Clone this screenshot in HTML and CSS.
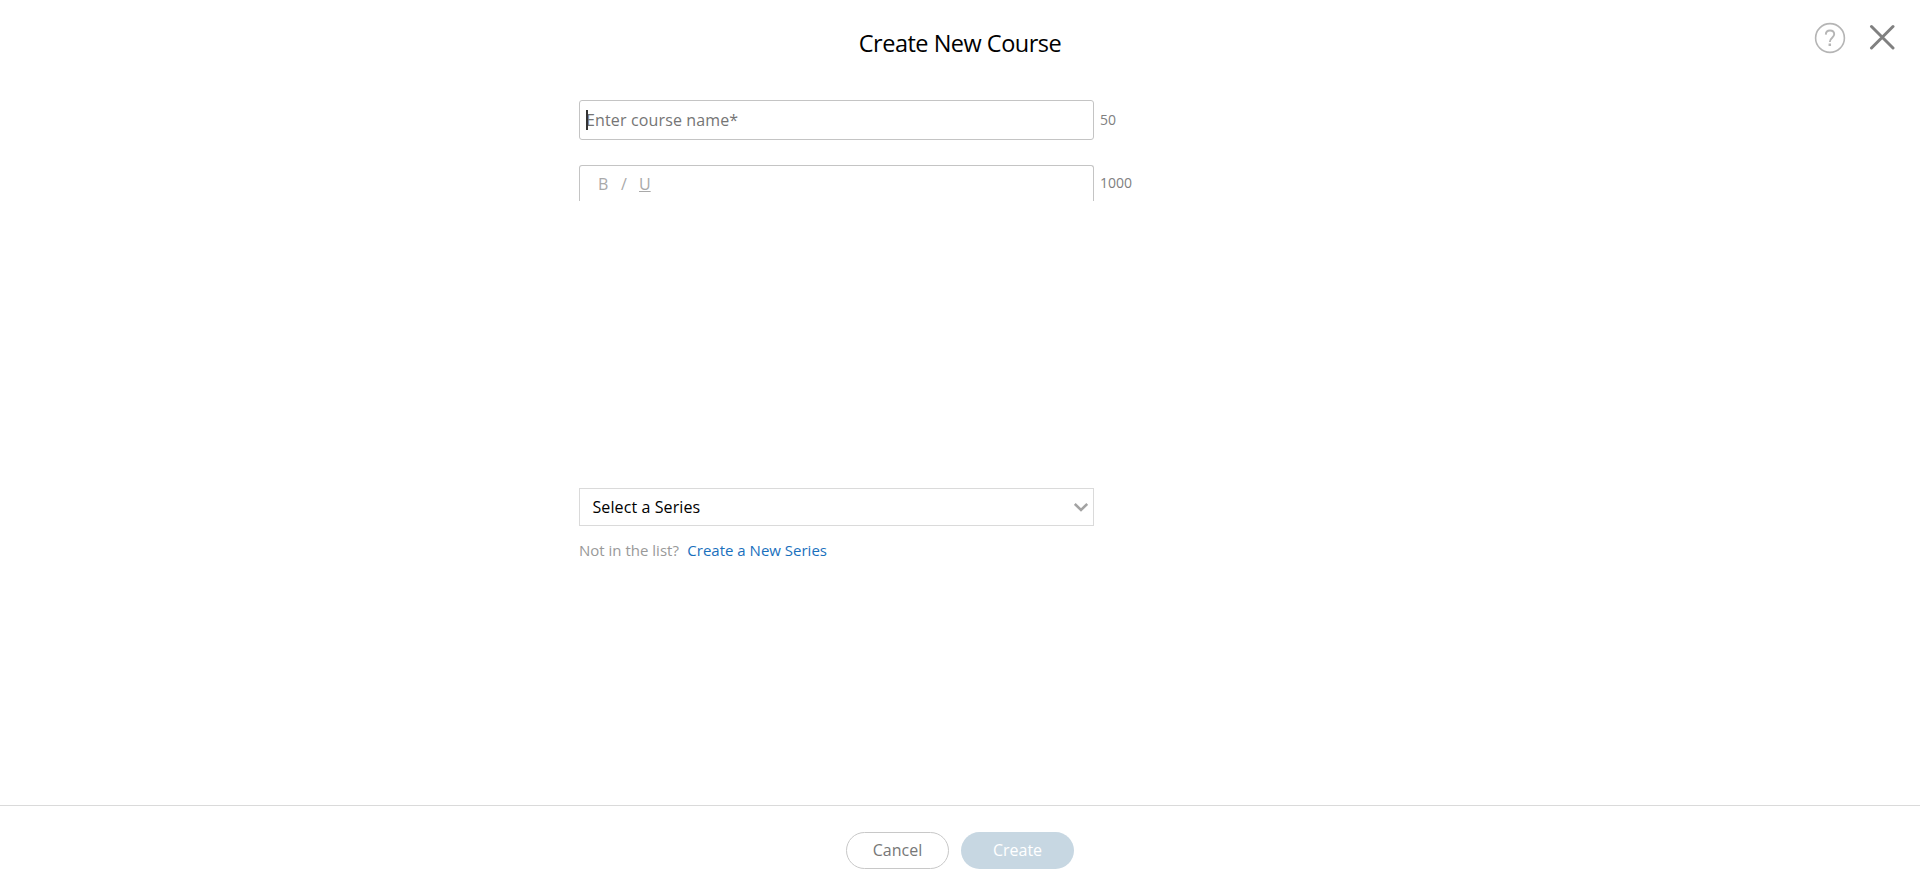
FILE: index.html
```html
<!DOCTYPE html>
<html lang="en">
<head>
<meta charset="utf-8">
<title>Create New Course</title>
<link rel="stylesheet" href="styles.css">
</head>
<body>
<div class="dialog">
  <header class="header">
    <span></span>
    <h1 class="title">Create New Course</h1>
    <div class="actions">
      <svg class="help" width="32" height="32" viewBox="0 0 32 32" fill="none" stroke="#b5b5b5"><circle cx="16" cy="16" r="14.4" stroke-width="1.6"/><path d="M11.8 12.6c.1-2.5 1.8-4.1 4.2-4.1s4.2 1.5 4.2 3.8c0 3.4-4.4 3.5-4.4 7.7" stroke-width="1.9"/><path d="M15.8 21.5v2.5" stroke-width="2.5"/></svg>
      <svg class="close" width="26" height="26" viewBox="0 0 26 26" stroke="#808080" stroke-width="3" stroke-linecap="round"><path d="M2.5 2.5l21.5 21.5M24 2.5L2.5 24"/></svg>
    </div>
  </header>
  <main class="form">
    <div class="row">
      <div class="field name"><span class="caret"></span>Enter course name*</div>
      <span class="count">50</span>
    </div>
    <div class="row editor-row">
      <div class="field toolbar"><span class="bold">B</span><span class="italic">/</span><span class="underline">U</span></div>
      <span class="count">1000</span>
    </div>
    <div class="select">
      <span>Select a Series</span>
      <svg width="14" height="9" viewBox="0 0 14 9" fill="none" stroke="#a3a3a3" stroke-width="2.5"><path d="M.8 1l6.2 6L13.2 1"/></svg>
    </div>
    <p class="hint">Not in the list?<a class="link">Create a New Series</a></p>
  </main>
  <footer class="footer">
    <button class="button cancel">Cancel</button>
    <button class="button create">Create</button>
  </footer>
</div>
</body>
</html>
```
FILE: styles.css
```css
* { box-sizing: border-box; }
body { margin: 0; background: #fff; font-family: "Open Sans", sans-serif; font-size: 16px; }
.dialog { display: flex; flex-direction: column; height: 894px; }
.header { display: grid; grid-template-columns: 1fr auto 1fr; height: 100px; }
.title { margin: 26px 0 0; font-size: 23.5px; line-height: 34px; font-weight: 400; letter-spacing: -.5px; color: #000; }
.actions { display: flex; justify-content: flex-end; align-items: flex-start; gap: 23px; padding: 22px 25px 0 0; }
.close { margin-top: 2px; }
.form { flex: 1; width: 762px; margin: 0 auto; }
.row { display: flex; gap: 6px; }
.field { width: 515px; border: 1px solid #c4c4c4; border-radius: 3px; }
.name { display: flex; align-items: center; position: relative; height: 40px; padding-left: 6px; color: #757575; letter-spacing: .14px; }
.caret { position: absolute; left: 6px; top: 9px; width: 2px; height: 20px; background: #333; }
.count { color: #808080; font-size: 14px; line-height: 40px; }
.editor-row { height: 323px; padding-top: 25px; }
.toolbar { display: flex; height: 36px; padding-left: 18px; border-bottom: 0; border-radius: 3px 3px 0 0; color: #a9a9a9; line-height: 36px; }
.editor-row .count { line-height: 36px; }
.bold { width: 23px; }
.italic { width: 18px; }
.underline { text-decoration: underline; }
.select { display: flex; align-items: center; justify-content: space-between; width: 515px; height: 38px; margin-top: 25px; padding: 0 5.5px 0 12.5px; border: 1px solid #dadada; color: #000; letter-spacing: .1px; }
.hint { margin: 12px 0 0; font-size: 15px; line-height: 24px; color: #999; }
.link { margin-left: 8.5px; color: #1a70bd; }
.footer { display: flex; justify-content: center; align-items: flex-start; gap: 12px; height: 89px; padding-top: 26px; border-top: 1px solid #dadada; }
.button { height: 37px; padding: 0 0 2px; border-radius: 19px; font: 16px "Open Sans", sans-serif; }
.cancel { width: 103px; border: 1px solid #c8c8c8; background: #fff; color: #777; }
.create { width: 113px; border: 0; background: #c7d7e2; color: #fff; }
```
